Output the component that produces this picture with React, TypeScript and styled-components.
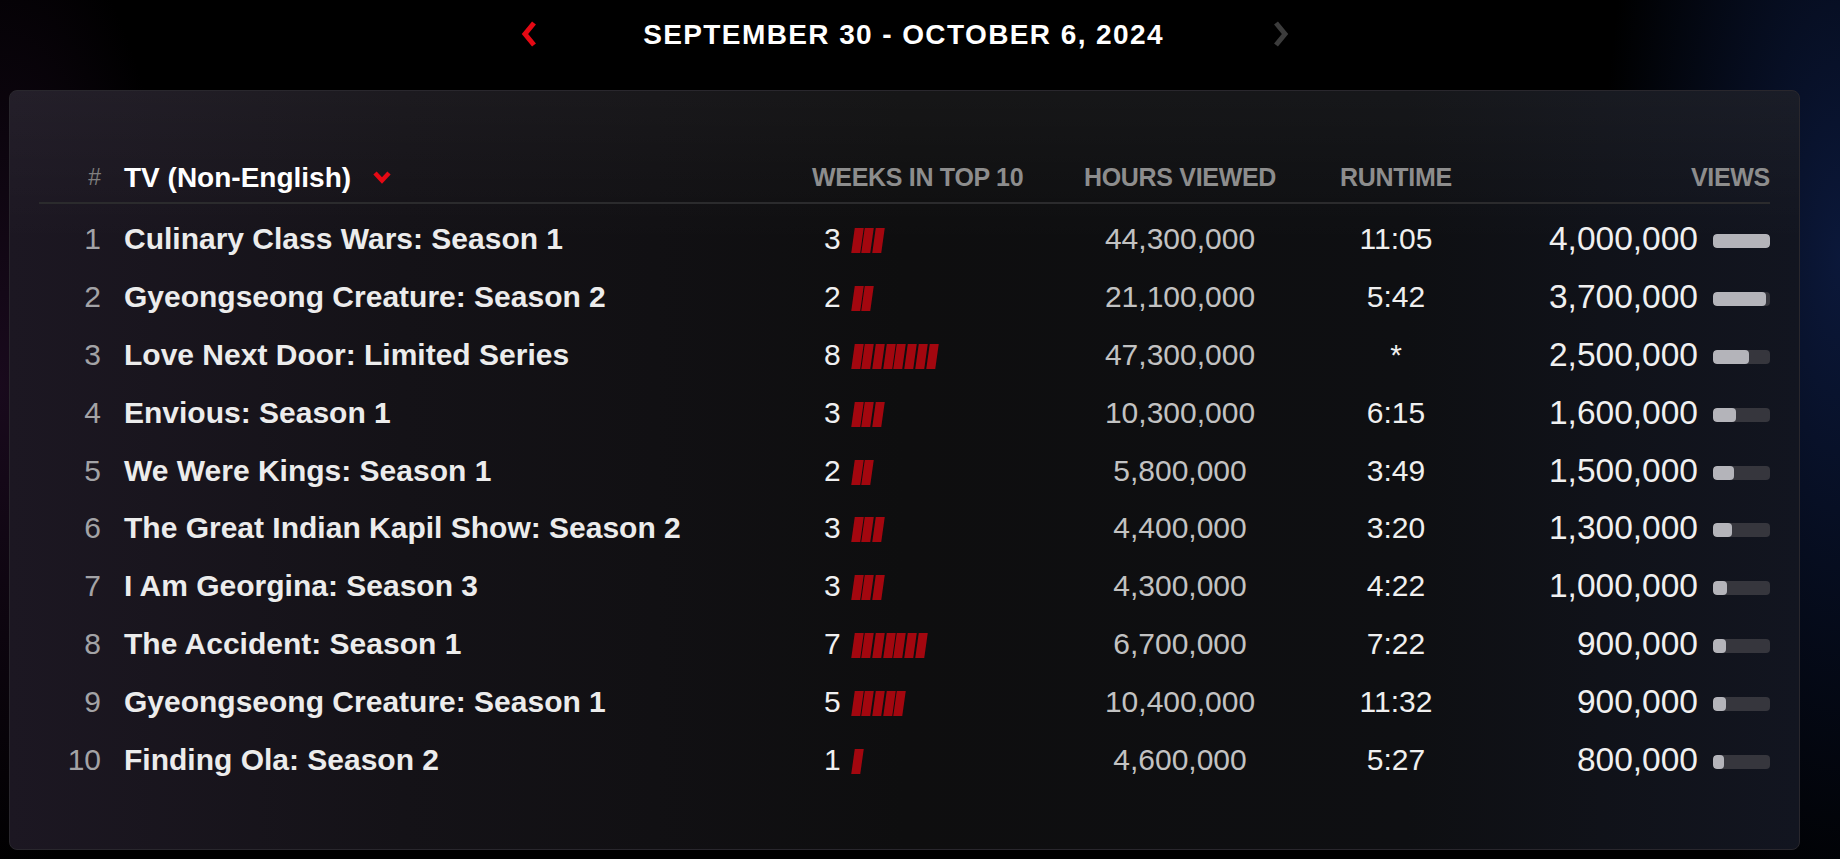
import React from "react";
import styled, { createGlobalStyle } from "styled-components";

const GlobalStyle = createGlobalStyle`
  html, body {
    margin: 0;
    padding: 0;
    background: #000;
  }
  body {
    font-family: "Liberation Sans", Arial, sans-serif;
    color: #f0f0f0;
  }
`;

const Page = styled.div`
  min-height: 859px;
  box-sizing: border-box;
  padding: 0 40px 0 9px;
  background:
    radial-gradient(ellipse 260px 700px at 0% 45%, rgba(45, 18, 52, 0.55), transparent 70%),
    radial-gradient(ellipse 320px 900px at 100% 30%, rgba(16, 34, 82, 0.7), transparent 75%),
    #000;
`;

const DateBar = styled.div`
  height: 68px;
  display: grid;
  grid-template-columns: 16px 736px 18px;
  justify-content: center;
  align-items: center;
  margin-bottom: 22px;
`;

const DateText = styled.h2`
  margin: 0;
  padding-top: 2px;
  text-align: center;
  font-size: 28px;
  font-weight: 700;
  letter-spacing: 1.4px;
  color: #fff;
`;

const Arrow = styled.svg<{ $active?: boolean }>`
  display: block;
  width: 18px;
  height: 28px;
  fill: none;
  stroke: ${(p) => (p.$active ? "#e50914" : "#3c3c3c")};
  stroke-width: 5;
`;

const Panel = styled.section`
  box-sizing: border-box;
  height: 760px;
  border: 1px solid #29272d;
  border-radius: 8px;
  padding: 67.5px 29px 0 29px;
  background:
    linear-gradient(180deg, rgba(255, 255, 255, 0.035), transparent 20%),
    linear-gradient(90deg, #1c1722 0%, #141217 22%, #0e0e0f 50%, #0e0f12 78%, #121520 100%);
`;

const Grid = styled.div`
  display: grid;
  grid-template-columns: 62px 711px 268px 200px 232px 258px;
  align-items: center;
`;

const HeaderRow = styled(Grid)`
  height: 45px;
  padding-bottom: 5px;
  box-sizing: border-box;
  border-bottom: 2px solid #2b2b2d;
  margin-bottom: 7px;
`;

const HeadCell = styled.div<{ $align?: "left" | "center" | "right" }>`
  text-align: ${(p) => p.$align || "left"};
  font-size: 25px;
  font-weight: 700;
  letter-spacing: -0.3px;
  color: #8d8d8d;
  white-space: nowrap;
`;

const Hash = styled.div`
  text-align: right;
  font-size: 23px;
  color: #7f7f7f;
`;

const CategoryButton = styled.button`
  display: flex;
  align-items: center;
  gap: 22px;
  margin-left: 23px;
  padding: 0;
  border: none;
  background: none;
  cursor: pointer;
  font-family: inherit;
  font-size: 28px;
  font-weight: 700;
  color: #fff;
`;

const Caret = styled.svg`
  width: 18px;
  height: 13px;
  fill: none;
  stroke: #e50914;
  stroke-width: 4.5;
`;

const Row = styled(Grid)`
  height: 57.8px;
  font-size: 30px;
`;

const Rank = styled.div`
  text-align: right;
  color: #a3a3a6;
`;

const Title = styled.div`
  padding-left: 23px;
  font-weight: 700;
  color: #ececec;
  white-space: nowrap;
`;

const Weeks = styled.div`
  display: flex;
  align-items: center;
  gap: 12px;
  padding-left: 12px;
  color: #f0f0f0;
`;

const WeekBars = styled.div`
  display: flex;
  gap: 2px;
  padding-top: 3px;
`;

const WeekBar = styled.span`
  display: block;
  width: 8.7px;
  height: 25px;
  background: #a3070f;
  transform: skewX(-8deg);
`;

const Hours = styled.div`
  text-align: center;
  color: #c2c2c2;
`;

const Runtime = styled.div`
  text-align: center;
  color: #efefef;
`;

const Views = styled.div`
  display: flex;
  justify-content: flex-end;
  align-items: center;
  gap: 15px;
  font-size: 33.5px;
  color: #f0f0f0;
`;

const Track = styled.div`
  width: 57px;
  height: 14px;
  border-radius: 4px;
  background: #36363d;
  overflow: hidden;
  margin-top: 4px;
`;

const Fill = styled.div`
  height: 100%;
  border-radius: 4px;
  background: #b4b4ba;
`;

type Show = {
  title: string;
  weeks: number;
  hours: string;
  runtime: string;
  views: number;
};

const shows: Show[] = [
  { title: "Culinary Class Wars: Season 1", weeks: 3, hours: "44,300,000", runtime: "11:05", views: 4000000 },
  { title: "Gyeongseong Creature: Season 2", weeks: 2, hours: "21,100,000", runtime: "5:42", views: 3700000 },
  { title: "Love Next Door: Limited Series", weeks: 8, hours: "47,300,000", runtime: "*", views: 2500000 },
  { title: "Envious: Season 1", weeks: 3, hours: "10,300,000", runtime: "6:15", views: 1600000 },
  { title: "We Were Kings: Season 1", weeks: 2, hours: "5,800,000", runtime: "3:49", views: 1500000 },
  { title: "The Great Indian Kapil Show: Season 2", weeks: 3, hours: "4,400,000", runtime: "3:20", views: 1300000 },
  { title: "I Am Georgina: Season 3", weeks: 3, hours: "4,300,000", runtime: "4:22", views: 1000000 },
  { title: "The Accident: Season 1", weeks: 7, hours: "6,700,000", runtime: "7:22", views: 900000 },
  { title: "Gyeongseong Creature: Season 1", weeks: 5, hours: "10,400,000", runtime: "11:32", views: 900000 },
  { title: "Finding Ola: Season 2", weeks: 1, hours: "4,600,000", runtime: "5:27", views: 800000 },
];

const maxViews = 4000000;

const App: React.FC = () => {
  return (
    <>
      <GlobalStyle />
      <Page>
        <DateBar>
          <Arrow $active viewBox="0 0 18 28">
            <polyline points="14,3 5,14 14,25" />
          </Arrow>
          <DateText>SEPTEMBER 30 - OCTOBER 6, 2024</DateText>
          <Arrow viewBox="0 0 18 28">
            <polyline points="4,3 13,14 4,25" />
          </Arrow>
        </DateBar>

        <Panel>
          <HeaderRow>
            <Hash>#</Hash>
            <CategoryButton>
              TV (Non-English)
              <Caret viewBox="0 0 18 13">
                <polyline points="2,2 9,9.5 16,2" />
              </Caret>
            </CategoryButton>
            <HeadCell>WEEKS IN TOP 10</HeadCell>
            <HeadCell $align="center">HOURS VIEWED</HeadCell>
            <HeadCell $align="center">RUNTIME</HeadCell>
            <HeadCell $align="right">VIEWS</HeadCell>
          </HeaderRow>

          {shows.map((s, i) => (
            <Row key={s.title}>
              <Rank>{i + 1}</Rank>
              <Title>{s.title}</Title>
              <Weeks>
                {s.weeks}
                <WeekBars>
                  {Array.from({ length: s.weeks }).map((_, k) => (
                    <WeekBar key={k} />
                  ))}
                </WeekBars>
              </Weeks>
              <Hours>{s.hours}</Hours>
              <Runtime>{s.runtime}</Runtime>
              <Views>
                {s.views.toLocaleString("en-US")}
                <Track>
                  <Fill style={{ width: `${(s.views / maxViews) * 100}%` }} />
                </Track>
              </Views>
            </Row>
          ))}
        </Panel>
      </Page>
    </>
  );
};

export default App;
